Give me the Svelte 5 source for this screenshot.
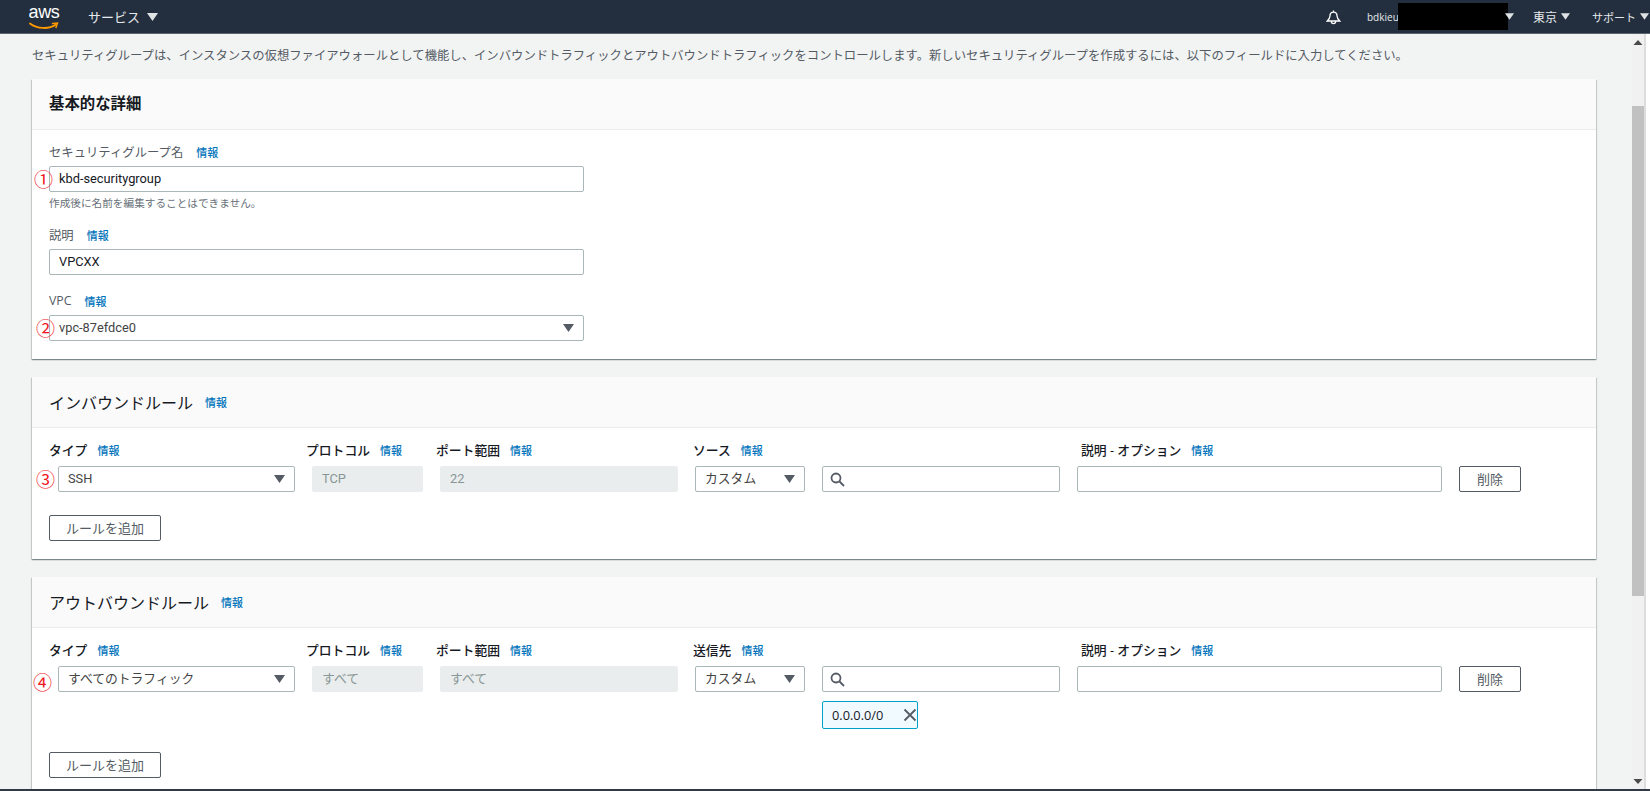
<script>
  const inbound = { source: 'ソース', type: 'SSH', proto: 'TCP', range: '22' };
  const outbound = { source: '送信先', type: 'すべてのトラフィック', proto: 'すべて', range: 'すべて' };
</script>

{#snippet info()}<a class="info" href="#top">情報</a>{/snippet}
{#snippet arrow()}<svg class="arrow" width="11" height="8" viewBox="0 0 11 8"><path d="M0 0h11L5.500 8z" fill="currentColor"/></svg>{/snippet}
{#snippet rule(r, mark, cls)}
  <div class="rules">
    <div class="lab l1"><b>タイプ</b>{@render info()}</div>
    <div class="lab l2"><b>プロトコル</b>{@render info()}</div>
    <div class="lab l3"><b>ポート範囲</b>{@render info()}</div>
    <div class="lab l4"><b>{r.source}</b>{@render info()}</div>
    <div class="lab"></div>
    <div class="lab l6"><b>説明 - オプション</b>{@render info()}</div>
    <div class="lab"></div>

    <div class="ctl first"><span class="mark {cls}">{mark}</span><div class="field sel"><span>{r.type}</span>{@render arrow()}</div></div>
    <div class="field off">{r.proto}</div>
    <div class="field off">{r.range}</div>
    <div class="field sel"><span>カスタム</span>{@render arrow()}</div>
    <div class="field search">
      <svg width="15" height="15" viewBox="0 0 15 15" fill="none" stroke="#545b64" stroke-width="1.800"><circle cx="6" cy="6" r="4.500"/><path d="M9.500 9.500l4.500 4.500"/></svg>
    </div>
    <div class="field"></div>
    <button class="btn">削除</button>
  </div>
{/snippet}

<div class="page">
  <header class="top">
    <div class="logo">
      <span class="aws">aws</span>
      <svg width="30" height="9" viewBox="0 0 30 9"><path d="M1 1.500C8 7 20 7.500 26.500 2.800" fill="none" stroke="#f90" stroke-width="1.800" stroke-linecap="round"/><path d="M23.500 1.500l5-.5-1.500 4.500" fill="none" stroke="#f90" stroke-width="1.500" stroke-linecap="round"/></svg>
    </div>
    <div class="nav services">サービス {@render arrow()}</div>
    <div class="spacer"></div>
    <svg class="bell" width="15" height="16" viewBox="0 0 17 18" fill="none" stroke="#fff" stroke-width="1.500"><path d="M8.500 1.500v2M8.500 3.500c-3 0-4 2.500-4 4.500 0 2.500-1.500 4-3 5.500h14c-1.500-1.500-3-3-3-5.500 0-2-1-4.500-4-4.500z"/><path d="M6 13.500c0 4 5 4 5 0"/></svg>
    <div class="user"><span class="uname">bdkieu</span><span class="redact"></span><span class="ua">{@render arrow()}</span></div>
    <div class="nav tokyo">東京 {@render arrow()}</div>
    <div class="nav support">サポート {@render arrow()}</div>
  </header>

  <div class="body">
    <main class="main">
      <p class="intro">セキュリティグループは、インスタンスの仮想ファイアウォールとして機能し、インバウンドトラフィックとアウトバウンドトラフィックをコントロールします。新しいセキュリティグループを作成するには、以下のフィールドに入力してください。</p>

      <section class="card c1">
        <div class="head h1"><h2 class="bold">基本的な詳細</h2></div>
        <div class="content">
          <div class="lab f"><span>セキュリティグループ名</span>{@render info()}</div>
          <div class="ctl w"><span class="mark m1">①</span><div class="field">kbd-securitygroup</div></div>
          <div class="hint">作成後に名前を編集することはできません。</div>
          <div class="lab f g2"><span>説明</span>{@render info()}</div>
          <div class="field w">VPCXX</div>
          <div class="lab f g3"><span>VPC</span>{@render info()}</div>
          <div class="ctl w"><span class="mark m2">②</span><div class="field sel"><span>vpc-87efdce0</span>{@render arrow()}</div></div>
        </div>
      </section>

      <section class="card c2">
        <div class="head"><h2>インバウンドルール</h2>{@render info()}</div>
        <div class="content rc">
          {@render rule(inbound, '③', 'm3')}
          <button class="btn add a2">ルールを追加</button>
        </div>
      </section>

      <section class="card c3">
        <div class="head"><h2>アウトバウンドルール</h2>{@render info()}</div>
        <div class="content rc">
          {@render rule(outbound, '④', 'm4')}
          <div class="token"><span>0.0.0.0/0</span>
            <svg width="14" height="14" viewBox="0 0 14 14" stroke="#545b64" stroke-width="1.800"><path d="M1.500 1.500l11 11M12.500 1.500l-11 11"/></svg>
          </div>
          <button class="btn add a3">ルールを追加</button>
        </div>
      </section>
    </main>
    <aside class="scroll">
      <div class="track">
        <svg class="sa" width="12" height="7" viewBox="0 0 12 7"><path d="M6 1l4.500 5h-9z" fill="#4a4a4a"/></svg>
        <div class="thumb"></div>
        <svg class="sb" width="12" height="7" viewBox="0 0 12 7"><path d="M6 6L1.500 1h9z" fill="#4a4a4a"/></svg>
      </div>
    </aside>
  </div>
  <div class="foot"></div>
</div>

<style>
  :global(body) { margin: 0; }
  .page {
    width: 1650px; height: 791px; display: flex; flex-direction: column; overflow: hidden;
    background: #f2f3f3; color: #16191f;
    font-family: "Open Sans", "Noto Sans CJK JP", sans-serif; font-size: 12.8px;
  }
  .top {
    flex: none; height: 33px; background: #232f3e; color: #fff; display: flex; align-items: center;
    border-bottom: 1px solid #5a6470; box-sizing: content-box;
  }
  .spacer { flex: 1; }
  .logo { margin-left: 29px; width: 30px; height: 33px; display: flex; flex-direction: column; align-items: center; }
  .logo svg { margin-top: -3px; flex: none; }
  .aws { font: 18px/25px "Liberation Sans", sans-serif; letter-spacing: -0.3px; color: #fff; }
  .nav { display: flex; align-items: center; gap: 4px; white-space: nowrap; font-size: 12px; color: #e6e9ec; }
  .nav .arrow, .ua .arrow { color: #dfe3e6; width: 9px; height: 7px; flex: none; }
  .services { margin-left: 29px; gap: 7px; font-size: 13px; }
  .services .arrow { width: 11px; height: 8px; }
  .bell { margin-right: 26px; flex: none; }
  .user { display: flex; align-items: center; font-size: 10px; font-weight: 500; color: #e6e9ec; width: 145px; }
  .uname { width: 31px; flex: none; white-space: nowrap; }
  .redact { width: 110px; height: 27px; background: #000; flex: none; }
  .ua { display: flex; margin-left: -3px; }
  .tokyo { margin-left: 21px; width: 59px; }
  .support { width: 58px; gap: 4px; font-size: 11px; }

  .body { flex: 1; display: flex; min-height: 0; }
  .main { flex: 1; min-width: 0; padding-left: 32px; overflow: hidden; }
  .intro { margin: 0; height: 45px; line-height: 43px; font-size: 12.35px; white-space: nowrap; color: #545b64; }
  .card {
    width: 1564px; margin-bottom: 18px; background: #fff; box-sizing: border-box;
    box-shadow: 0 1px 1px 0 rgba(0,28,36,.3), 1px 1px 1px 0 rgba(0,28,36,.15), -1px 1px 1px 0 rgba(0,28,36,.15);
  }
  .c1 { height: 280px; }
  .c2 { height: 182px; }
  .c3 { height: 230px; }
  .head {
    height: 51px; box-sizing: border-box; background: #fafafa; border-bottom: 1px solid #eaeded;
    display: flex; align-items: center; padding-left: 17px; gap: 12px;
  }
  .h1 { padding-bottom: 3px; }
  h2 { margin: 0; font-size: 16px; font-weight: 400; color: #16191f; }
  h2.bold { font-weight: 700; font-size: 15.4px; }
  .content { padding: 13px 17px 0; }
  .rc { padding-top: 13px; position: relative; }
  .lab { display: flex; align-items: center; gap: 10px; height: 17px; white-space: nowrap; }
  .lab b { font-weight: 500; color: #16191f; }
  .info { color: #0073bb; font-size: 11px; text-decoration: none; font-weight: 500; }
  .f { color: #16191f; margin-bottom: 6px; gap: 13px; }
  .f span { color: #545b64; font-size: 12.35px; }
  .ctl { position: relative; }
  .w { width: 535px; }
  .field {
    height: 26px; box-sizing: border-box; border: 1px solid #aab7b8; border-radius: 2px; background: #fff;
    padding: 0 9px; line-height: 24px; font-family: Roboto, "Noto Sans CJK JP", sans-serif; font-size: 12.8px;
    color: #16191f; white-space: nowrap;
  }
  .sel { display: flex; align-items: center; justify-content: space-between; color: #444; }
  .sel .arrow { color: #545b64; flex: none; }
  .hint { font-size: 10.65px; color: #687078; line-height: 16px; margin-top: 3px; }
  .g2 { margin-top: 15px; }
  .g3 { margin-top: 17px; }
  .mark {
    position: absolute; top: 2px; font: 19px/22px "Noto Sans CJK JP", sans-serif; color: #f0141e;
  }
  .m1 { left: -15px; }
  .m2 { left: -13px; }
  .m3 { left: -22px; }
  .m4 { left: -25px; top: 5px; }
  .rules {
    display: grid; grid-template-columns: 246px 111px 238px 110px 238px 365px 62px; column-gap: 17px; row-gap: 8px;
  }
  .l2 { margin-left: -6px; }
  .l3 { margin-left: -4px; }
  .l4 { margin-left: -2px; }
  .l6 { margin-left: 4px; }
  .first { margin-left: 9px; }
  .off { background: #eaeded; border-color: #eaeded; color: #879596; }
  .search { display: flex; align-items: center; padding-left: 7px; }
  .btn {
    height: 26px; box-sizing: border-box; background: #fff; border: 1px solid #545b64; border-radius: 2px;
    font: inherit; font-size: 13px; color: #545b64; padding: 0; line-height: 24px;
  }
  .add { display: block; width: 112px; }
  .a2 { margin-top: 23px; }
  .a3 { margin-top: 23px; }
  .token {
    margin: 9px 0 0 773px; width: 96px; height: 28px; box-sizing: border-box;
    background: #f1faff; border: 1px solid #00a1c9; border-radius: 2px;
    display: flex; align-items: center; justify-content: space-between; padding: 0 0 0 9px; color: #16191f;
  }

  .scroll { flex: none; width: 18px; display: flex; background: #fff; }
  .track {
    width: 12px; background: #f1f1f1; border-right: 2px solid #ddd;
    display: flex; flex-direction: column; align-items: center;
  }
  .sa { margin-top: 5px; flex: none; }
  .thumb { flex: none; width: 12px; height: 490px; margin-top: 60px; background: #c1c1c1; }
  .sb { margin-top: auto; margin-bottom: 4px; flex: none; }
  .foot { flex: none; height: 2px; background: #2f3a46; }
</style>
